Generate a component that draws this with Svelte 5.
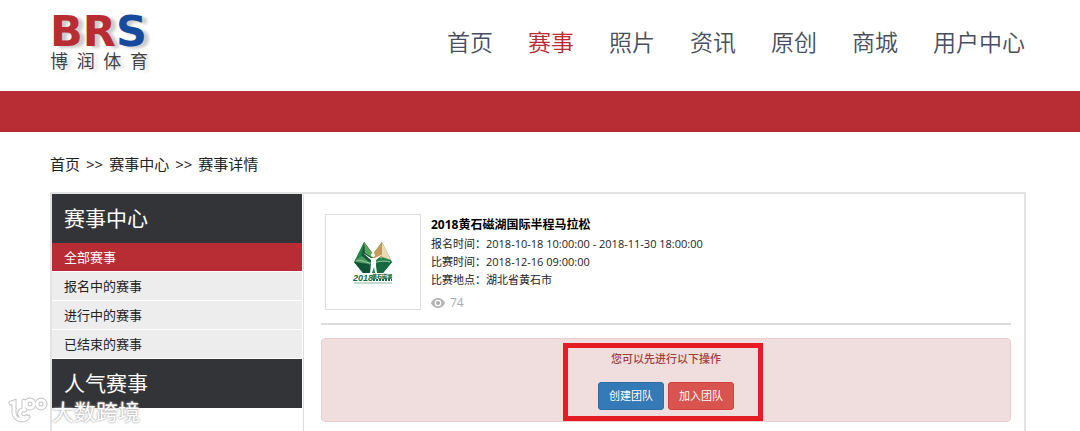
<script lang="ts">
	type Link = { label: string; href: string; active?: boolean };

	const navLinks: Link[] = [
		{ label: '首页', href: '#home' },
		{ label: '赛事', href: '#events', active: true },
		{ label: '照片', href: '#photos' },
		{ label: '资讯', href: '#news' },
		{ label: '原创', href: '#original' },
		{ label: '商城', href: '#shop' },
		{ label: '用户中心', href: '#user' }
	];

	const eventLinks: Link[] = [
		{ label: '全部赛事', href: '#all', active: true },
		{ label: '报名中的赛事', href: '#open' },
		{ label: '进行中的赛事', href: '#running' },
		{ label: '已结束的赛事', href: '#finished' }
	];

	const event = {
		title: '2018黄石磁湖国际半程马拉松',
		rows: [
			['报名时间', '2018-10-18 10:00:00 - 2018-11-30 18:00:00'],
			['比赛时间', '2018-12-16 09:00:00'],
			['比赛地点', '湖北省黄石市']
		],
		views: 74
	};
</script>

<div class="page">
	<header class="header">
		<a class="logo" href="#home" aria-label="BRS 博润体育">
			<span class="logo-en">BR<span class="logo-s">S</span></span>
			<span class="logo-cn">
				{#each '博润体育' as char}
					<span>{char}</span>
				{/each}
			</span>
		</a>
		<nav class="nav">
			{#each navLinks as link}
				<a href={link.href} class:active={link.active}>{link.label}</a>
			{/each}
		</nav>
	</header>
	<div class="banner"></div>

	<nav class="breadcrumb" aria-label="breadcrumb">
		<a href="#home">首页</a>
		<span>&gt;&gt;</span>
		<a href="#events">赛事中心</a>
		<span>&gt;&gt;</span>
		<a href="#detail">赛事详情</a>
	</nav>

	<div class="panel">
		<aside class="sidebar">
			<h2>赛事中心</h2>
			<ul>
				{#each eventLinks as link}
					<li><a href={link.href} class:active={link.active}>{link.label}</a></li>
				{/each}
			</ul>
			<h2>人气赛事</h2>
		</aside>

		<main class="content">
			<section class="event">
				<div class="thumb">
					<svg viewBox="0 0 40 44" width="40" height="44" aria-hidden="true">
						<path fill="#23834a" d="M11 1 1 21l9 11h20l9-11L29 1l-9 12z" />
						<path fill="#14593a" d="M11 1 8 17l12 5v-9z" />
						<path fill="#5fa35c" d="m11 1 9 12v4l-8-5z" />
						<path fill="#c99b59" d="m29 1-9 12v9l7-7z" />
						<path fill="#ead9b4" d="m29 1 9 18-9-3z" />
						<path fill="#b99a65" d="m29 1-3 15 3 2z" />
						<path fill="#4f9c61" d="m3 19 6-4 9 8-8 3z" />
						<path fill="#0f5434" d="M1 21l15 2 4 9H10z" />
						<path fill="#17693f" d="M24 21h15l-9 11h-9z" />
						<path stroke="#9cc7a2" d="M3 20c7-2 11 3 16 2s11-3 18-1" fill="none" />
						<circle cx="20" cy="14" r="2" fill="#fff" />
						<path fill="#fff" d="m10 12 8 5h4l8-4-7 6v6l1 7h-2l-1-6-2 6h-2l1-8v-5z" />
						<text x="0" y="40" class="thumb-year">2018</text>
						<text x="19" y="37" class="thumb-name">黄石磁湖</text>
						<path stroke="#176b40" stroke-width="2" stroke-dasharray="2 1" d="M20 39h19" />
						<path stroke="#8fb59f" d="M1 42h38" />
					</svg>
				</div>
				<div class="info">
					<h1>{event.title}</h1>
					{#each event.rows as [label, value]}
						<p>{label}：{value}</p>
					{/each}
					<div class="views">
						<svg viewBox="0 0 14 10" width="14" height="10" aria-hidden="true">
							<path fill="#b5b5b5" d="M7 0C3.500 0 1 2.500 0 5c1 2.500 3.500 5 7 5s6-2.500 7-5c-1-2.500-3.500-5-7-5z" />
							<circle cx="7" cy="5" r="3.300" fill="#fff" />
							<circle cx="7" cy="5" r="2" fill="#aaa" />
						</svg>
						<span>{event.views}</span>
					</div>
				</div>
			</section>

			<section class="alert">
				<div class="highlight"></div>
				<p>您可以先进行以下操作</p>
				<div class="actions">
					<button type="button" class="btn primary">创建团队</button>
					<button type="button" class="btn danger">加入团队</button>
				</div>
			</section>
		</main>
	</div>

	<div class="watermark">
		<svg viewBox="0 0 40 28" width="40" height="28" fill="none" stroke-linecap="round" aria-hidden="true">
			{#each [['#c4c4c4', 5], ['#fff', 3]] as [color, width]}
				<g stroke={color} stroke-width={width}>
					<path d="M3 6l3-1v11a8 8 0 0 0 14 4" />
					<path d="M17 13a4 4 0 1 0 1 7" />
					<circle cx="22" cy="7" r="4" />
					<circle cx="33" cy="7" r="4" />
					<path d="M16 4v7" />
				</g>
			{/each}
		</svg>
		<span>大数跨境</span>
	</div>
</div>

<style>
	:global(body) {
		margin: 0;
		background: #fff;
	}

	.page {
		display: flex;
		flex-direction: column;
		min-height: 100vh;
		position: relative;
		font-family: 'Open Sans', 'Noto Sans CJK SC', sans-serif;
		color: #222;
	}

	a {
		color: inherit;
		text-decoration: none;
	}

	h1,
	h2,
	p,
	ul {
		margin: 0;
		padding: 0;
		font-weight: 400;
	}

	.header {
		display: flex;
		justify-content: space-between;
		height: 91px;
		padding: 0 55px 0 50px;
	}

	.logo {
		display: flex;
		flex-direction: column;
		width: 98px;
		padding-top: 15px;
	}

	.logo-en {
		font: 700 43px/32px 'DejaVu Sans', sans-serif;
		color: #b72d33;
		text-shadow: 5px 2px 3px #ccc;
	}

	.logo-s {
		color: #164a9c;
	}

	.logo-cn {
		display: flex;
		justify-content: space-between;
		font-size: 18px;
		line-height: 28px;
		color: #444;
		text-shadow: 4px 2px 3px #ddd;
	}

	.nav {
		display: flex;
		gap: 35px;
		font-size: 23px;
		font-weight: 350;
		line-height: 85px;
		color: #474e5d;
	}

	.nav .active {
		color: #b72d33;
	}

	.banner {
		height: 41px;
		background: #b72d33;
	}

	.breadcrumb {
		display: flex;
		gap: 6px;
		padding: 20px 50px 16px;
		font-size: 15px;
		line-height: 24px;
	}

	.panel {
		display: flex;
		flex: 1;
		margin: 0 54px 0 50px;
		border: 2px solid #e3e3e3;
		border-bottom: none;
	}

	.sidebar {
		flex: none;
		width: 250px;
		padding-right: 1px;
		border-right: 1px solid #ddd;
	}

	.sidebar h2 {
		padding-left: 12px;
		font-size: 21px;
		line-height: 49px;
		color: #fff;
		background: #333438;
	}

	.sidebar ul {
		list-style: none;
	}

	.sidebar li a {
		display: block;
		padding-left: 12px;
		border-bottom: 1px solid #fff;
		font-size: 13px;
		line-height: 28px;
		background: #ededed;
	}

	.sidebar li .active {
		color: #fff;
		background: #b72d33;
	}

	.content {
		flex: 1;
		padding: 20px 13px 8px 17px;
	}

	.event {
		display: flex;
		gap: 10px;
		padding: 0 4px 10px;
		border-bottom: 2px solid #ddd;
	}

	.thumb {
		display: flex;
		align-items: center;
		justify-content: center;
		width: 94px;
		height: 92px;
		padding-top: 2px;
		border: 1px solid #ddd;
	}

	.thumb-year {
		font: italic 700 9px 'Liberation Sans', sans-serif;
		fill: #176b40;
	}

	.thumb-name {
		font: 900 5px 'Noto Sans CJK SC', sans-serif;
		fill: #176b40;
	}

	.info h1 {
		font-size: 12px;
		font-weight: 700;
		line-height: 21px;
		color: #000;
	}

	.info p {
		font-size: 11px;
		line-height: 18px;
	}

	.views {
		display: flex;
		align-items: center;
		gap: 5px;
		margin-top: 4px;
		font-size: 12px;
		line-height: 20px;
		color: #aaa;
	}

	.alert {
		position: relative;
		margin-top: 13px;
		padding: 11px 12px;
		border: 1px solid #ebccd1;
		border-radius: 4px;
		text-align: center;
		color: #a13f3d;
		background: #f0dddd;
	}

	.alert p {
		font-size: 11px;
		font-weight: 500;
		line-height: 18px;
	}

	/* red frame drawn over the action area */
	.highlight {
		position: absolute;
		inset: 4px 6px 0 0;
		width: 190px;
		margin: 0 auto;
		border: 5px solid #e51c23;
		pointer-events: none;
	}

	.actions {
		display: flex;
		justify-content: center;
		gap: 4px;
		margin-top: 14px;
	}

	.btn {
		padding: 0 10px;
		border: 1px solid #2e6da4;
		border-radius: 3px;
		font-family: inherit;
		font-size: 11px;
		line-height: 26px;
		color: #fff;
		background: #337ab7;
		cursor: pointer;
	}

	.btn.danger {
		border-color: #d43f3a;
		background: #d9534f;
	}

	.watermark {
		position: absolute;
		left: 8px;
		bottom: 6px;
		display: flex;
		align-items: center;
		gap: 4px;
		font-size: 22px;
		line-height: 28px;
		color: #fff;
		text-shadow: 0 0 2px #999, 0 0 2px #bbb;
		pointer-events: none;
	}
</style>
